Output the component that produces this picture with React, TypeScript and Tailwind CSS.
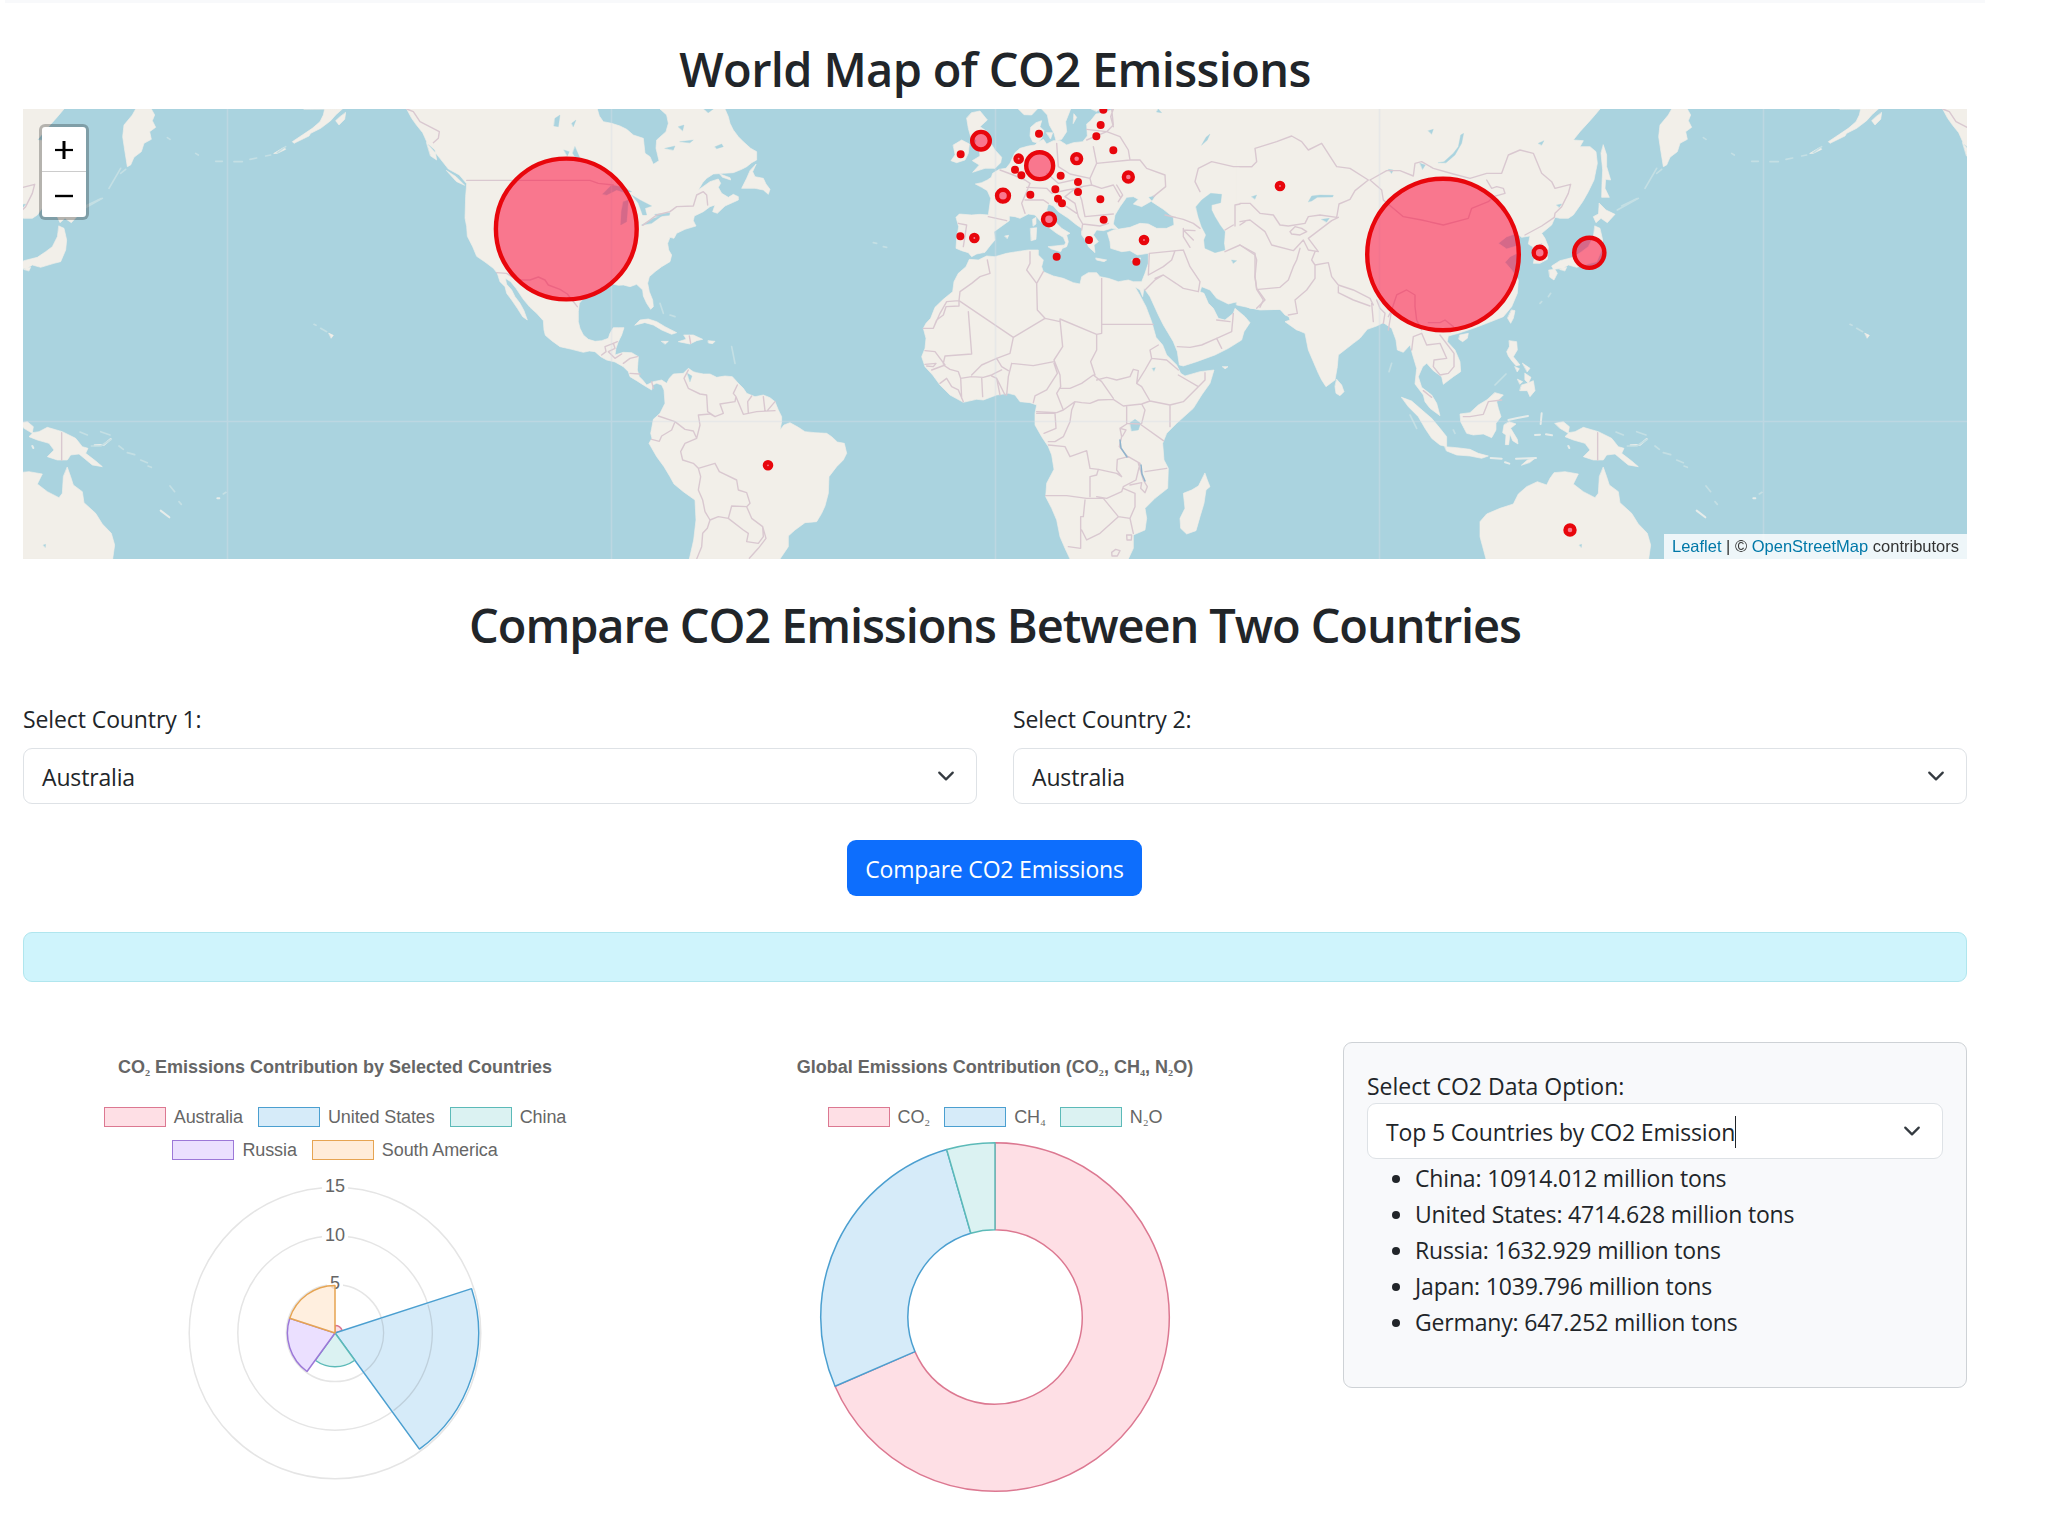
import React from "react";

const LAND = "#f2efe9";
const WATER = "#aad3df";

/* Coastlines are stored in thirds of a pixel, relative to each region's origin. */
const americas = {
  land: [
    "M-220 27L-205 55L-190 76L-172 98L-155 136L-130 163L-118 178L-95 207L-62 225L-40 251L-43 289L-45 354L-40 380L-38 409L-22 440L-10 469L15 486L40 505L52 520L60 545L75 560L80 580L95 600L112 625L128 650L142 660L132 632L120 610L105 590L95 570L80 553L76 535L92 545L108 565L130 598L150 622L170 640L190 662L192 690L196 706L215 722L240 740L275 748L310 757L328 753L345 755L362 770L380 780L405 786L430 800L445 815L450 830L470 842L490 855L515 870L518 855L530 850L545 855L552 870L555 910L540 940L520 958L515 985L512 1000L516 1015L507 1030L530 1070L552 1100L570 1130L582 1152L610 1175L645 1200L648 1260L641 1320L628 1377L900 1377L925 1340L925 1308L945 1290L975 1268L1010 1265L1025 1240L1035 1218L1045 1180L1047 1130L1070 1100L1090 1080L1100 1060L1093 1030L1072 1026L1055 1010L1040 1000L1005 998L975 995L955 982L930 968L912 975L900 990L905 965L905 950L895 930L885 905L870 893L850 885L825 890L800 880L790 865L775 850L757 830L735 828L710 832L690 822L670 822L650 818L640 815L625 805L610 820L580 822L568 835L560 850L545 840L520 845L500 855L488 840L478 830L472 810L475 770L455 758L430 757L405 765L408 745L415 725L425 705L432 683L415 683L400 683L390 700L385 715L365 722L345 724L325 718L310 705L300 685L295 665L295 635L298 610L315 590L340 580L365 560L390 550L415 556L430 555L450 560L470 553L488 570L490 588L500 610L512 628L520 620L518 600L508 575L503 550L508 530L525 515L545 500L570 485L575 465L566 450L563 430L570 412L582 415L590 400L615 388L648 378L640 362L643 348L670 335L690 320L705 315L698 335L712 340L735 318L775 300L775 290L760 283L745 292L725 280L715 262L722 250L715 237L690 245L655 270L668 248L680 235L700 222L730 220L760 218L785 208L800 200L815 188L830 180L830 155L812 145L790 125L775 110L760 90L750 70L745 50L735 27L540 27L560 45L565 70L558 95L530 120L528 145L537 182L520 193L510 170L495 160L490 115L460 105L440 88L420 78L395 70L370 65L358 48L352 27Z",
    "M828 193L818 215L825 230L850 235L858 252L870 268L865 283L850 270L825 265L785 265L800 235L810 212Z",
    "M465 675L480 660L505 657L530 665L555 680L590 698L575 703L545 690L520 675L495 668Z",
    "M612 705L640 705L668 718L650 722L630 732L595 725L618 718Z",
    "M545 724L565 724L556 732Z",
    "M685 722L705 724L698 731L686 729Z",
    "M720 222L750 233L752 240L728 232Z",
    "M-160 128L-135 150L-130 180L-148 168Z",
    "M-100 212L-72 230L-46 256L-70 245Z",
  ],
  lakes: [
    "M368 282L395 255L430 262L455 275L435 278L410 270L380 285Z",
    "M430 305L445 300L440 365L422 375L424 335Z",
    "M455 285L480 300L515 318L495 325L500 345L488 345L475 310Z",
    "M485 375L520 355L545 348L515 370Z",
    "M525 343L570 338L568 346L530 350Z",
    "M285 140L300 175L295 185L278 160Z",
    "M252 150L268 155L262 168Z",
    "M622 820L636 828L630 845Z",
    "M225 55L240 45L235 80L222 78Z",
    "M275 70L288 60L280 80Z",
    "M555 145L585 138L580 150Z",
    "M705 140L725 132L730 140L710 146Z",
    "M595 80L612 75L608 92Z",
    "M600 125L640 120L630 128Z",
    "M672 27L700 27L685 38Z",
  ],
  borders: [
    "M-40 241H330L355 250L400 255",
    "M488 376L530 345L570 335L590 320L640 318L650 285L670 275L680 285L683 315",
    "M50 518L80 520L110 540L150 540L175 531L195 540L205 555L240 568L262 582L292 620",
    "M365 765L378 755L375 740L400 730L412 725M400 730L405 745L385 755L405 775L425 762M430 790L450 775L472 770M450 820L480 822M515 845L520 865",
    "M625 810L612 835L625 865L660 882L680 885L683 935L705 950L730 940L720 912L765 905L768 890L760 880L772 855M768 890L790 943L830 935L885 932M805 940L803 905L815 888M850 890L855 932M885 905L862 932",
    "M705 950L690 942L655 945L660 975L650 1015M535 948L585 965L575 990L545 1008L538 1024L515 1018M585 965L615 988L640 993L650 1015L615 1030L602 1055L608 1080L640 1090L655 1105L705 1090L718 1115L770 1140L775 1170L800 1178L810 1210L800 1220L755 1218L745 1255L715 1250L690 1260L675 1235L668 1200L655 1170L662 1130L655 1105",
    "M690 1260L682 1285L668 1300L665 1340L650 1377M745 1255L790 1290L805 1300L800 1325L835 1330L850 1310L848 1280L815 1255L800 1220M848 1280L858 1315L835 1345L808 1375",
    "M628 708L632 730",
    "M-220 27L-200 35L-180 65L-122 95L-125 115L-140 128",
  ],
  faint: ["M540 610L550 640M570 645L585 650M755 740L765 790M1180 428L1190 430M1210 440L1220 442"],
};

const africaEurope = {
  land: [
    "M640 27L612 38L588 42L572 62L560 72L562 108L548 125L520 128L500 135L480 122L460 122L440 132L430 118L410 128L398 125L390 108L392 82L408 68L425 62L420 80L432 92L425 115L405 135L385 138L360 145L345 158L330 190L318 205L298 208L278 220L274 232L262 240L245 248L226 252L245 262L262 272L272 295L265 345L240 343L215 345L178 342L168 352L176 380L170 415L168 445L185 452L205 458L215 470L230 462L255 457L272 435L285 420L282 395L310 375L328 362L328 348L345 350L360 355L385 342L405 345L425 368L450 385L470 400L490 412L497 428L488 445L500 440L505 425L500 405L510 400L485 385L470 370L455 350L440 330L445 312L460 318L475 335L505 355L530 375L545 385L545 405L560 425L565 440L585 458L582 435L595 425L580 405L590 390L610 392L635 385L655 388L640 372L645 345L660 320L680 292L700 290L715 298L700 312L725 320L755 303L745 292L770 283L755 305L790 328L820 352L822 375L800 385L770 385L745 372L720 370L690 382L640 390L622 398L630 425L632 445L665 455L690 452L712 465L745 460L745 490L735 520L725 545L700 545L685 540L655 545L625 535L600 530L590 518L565 518L545 530L540 552L520 548L490 535L460 528L430 515L425 500L430 480L415 465L415 450L385 450L350 455L320 460L285 470L260 468L235 480L208 478L198 500L175 520L162 545L158 575L130 598L105 622L92 655L78 670L70 685L78 715L75 745L65 770L75 800L98 825L120 855L150 885L190 907L230 898L250 900L290 885L325 880L345 885L360 905L390 908L410 915L405 940L405 975L425 1010L445 1040L455 1065L462 1108L440 1150L437 1190L455 1225L470 1260L480 1310L495 1345L510 1377L685 1377L700 1345L700 1305L735 1290L740 1255L735 1225L765 1195L803 1165L805 1105L792 1080L788 1030L800 1000L830 970L880 925L905 885L930 850L942 810L900 815L855 828L842 820L830 795L800 765L788 735L768 712L755 665L738 620L722 590L705 560L720 570L728 590L732 565L750 590L775 645L790 675L820 725L832 755L838 795L850 798L890 785L945 765L985 745L1025 720L1032 695L1050 668L1035 650L1005 625L1000 640L975 660L955 655L940 625L925 610L912 580L900 575L905 560L930 570L950 595L985 612L1012 605L1050 625L1100 628L1140 628L1165 645L1170 660L1155 665L1190 690L1220 690L1220 27Z",
    "M215 38L240 33L262 60L240 80L262 95L265 118L285 150L305 172L302 188L285 205L255 205L218 217L238 195L217 182L240 168L238 150L222 148L230 120L212 110L205 85L200 55Z",
    "M160 135L185 120L208 132L205 160L195 180L170 188L153 182L165 165Z",
    "M425 27L442 45L448 75L462 100L468 122L485 118L500 95L497 65L512 27Z",
    "M355 27L372 44L395 45L412 27Z",
    "M522 42L530 52L520 70Z",
    "M440 98L458 98L452 116Z",
    "M575 27L600 27L590 34Z",
    "M392 385L410 383L408 418L394 422Z",
    "M398 358L408 352L408 372L400 378Z",
    "M445 440L492 435L482 455L455 447Z",
    "M588 474L620 480L612 485L590 480Z",
    "M695 480L722 474L712 490Z",
    "M915 1120L922 1140L930 1160L918 1170L912 1210L900 1250L888 1292L860 1302L842 1285L840 1255L855 1225L850 1180L875 1170L895 1158Z",
    "M315 408L326 406L322 415Z",
    "M968 800L984 800L976 806Z",
  ],
  lakes: [
    "M888 320L905 300L932 280L965 283L962 308L935 315L935 330L945 350L960 375L975 395L972 430L975 450L945 458L915 445L912 420L918 405L905 380L895 350Z",
    "M690 968L705 958L722 970L715 990L695 993Z",
    "M775 27L785 38L770 36Z",
    "M995 480L1010 482L1000 490Z",
    "M1055 290L1070 285L1065 297Z",
    "M905 135L918 112L930 102L922 120Z",
    "M757 805L766 803L762 813Z",
  ],
  borders: [
    "M262 480L270 520L240 530L215 550L180 575L177 602L140 605L120 640L100 685H70M177 602L177 618L138 620L130 645L110 660L100 685",
    "M177 602L340 712L435 655L480 665M205 635L215 762L135 768L130 790M75 752L105 755L135 795",
    "M435 655L412 630L410 550L380 510L390 490L390 455M410 550L430 515",
    "M480 657L590 703L605 700V535M605 673H760M590 703V750L572 785L585 825M480 660L488 740L462 780L480 825L482 860",
    "M340 712L330 760L290 775L245 795L215 825M290 775L305 800L325 812M335 790L400 797L462 785M215 830L250 832L275 825L305 810M245 832L248 890M275 828L290 835L300 885M290 835L315 885M335 790L325 830L320 885",
    "M130 795L150 808L175 815L182 835L215 830M182 835L185 895M120 850L140 835L155 860L175 870L190 905M75 793L108 790L100 800L80 798M135 795L95 810",
    "M462 790L472 820L440 870L405 888L400 908M482 860L470 880L490 930L470 938L410 935M482 865L510 865L545 850L580 825L605 845L640 895",
    "M490 930L525 905L545 908L570 910L595 900L640 898L670 918L725 912L750 903L810 915M590 840L620 832L650 840L690 830L700 808L715 812L710 850L725 860L750 903M710 850L735 810L755 775L800 780L835 810M755 775L750 750L775 735M835 825L895 860L850 905L810 915V980M895 860L915 840V818",
    "M680 918L680 970L720 972L790 1022M725 912L735 930L725 970M410 940L465 940L468 985L432 1000M525 905L515 930L510 965L490 1010L465 1025L445 1025",
    "M445 1035L495 1040L510 1070L560 1052L570 1105L595 1108L590 1125L570 1130L570 1190M595 1108L650 1120L665 1130L650 1110L652 1078L685 1070L720 1090L708 1140L670 1160L665 1175L620 1195L590 1190",
    "M437 1187H500L560 1195L610 1195M610 1195L655 1250L690 1255L700 1300M555 1200L550 1250H542V1345L505 1340M545 1290L560 1320L600 1300L655 1250M670 1165L705 1180L705 1220L690 1255M735 1115L800 1105M715 1090L730 1140L742 1160L735 1178L722 1165L725 1148L690 1155M680 972L660 985L665 1010L658 1040L685 1072M660 985L678 990L668 1008",
    "M647 1348L660 1352L652 1368L636 1368L635 1357ZM680 1305L695 1305L694 1320L681 1320Z",
    "M832 740L870 742L905 735L950 715L965 745M950 715L995 695L1000 640M950 660L990 665M735 570L765 540L790 525L850 565L895 575M745 525L748 460L830 452L850 450M790 525L765 535M745 525L790 500L815 480L825 452M850 450L870 500L900 545L895 575M870 442L850 410L850 385M795 345L850 358L880 370L900 385M850 390L885 392M850 390L880 420",
    "M975 455L1020 435L1065 460L1065 530L1070 568L1090 600L1080 622M975 390L1000 375M1005 378V315L1020 312M1020 375L1035 365",
    "M900 275L885 245L895 205L935 185L1000 200L1055 200",
    "M265 350L320 362M175 370L200 375L190 440M300 210L340 225L375 240L390 250L380 275L365 310L375 340M375 300L430 300L445 310M380 262L440 265L455 280L500 270L545 262M470 130L475 200L510 222L570 235L590 190L580 140M440 220L475 250L520 240M560 120L620 95L660 110L685 150L690 180L590 190M620 95L640 75L635 27M560 88L620 95",
    "M690 180L720 180L740 205L795 225L797 260L760 290M570 235L575 255L605 265L640 255L660 290M495 290L530 262L575 255M530 262L545 300L555 350L640 342M495 290L525 310L535 350L548 372L545 390M548 372L600 378L625 370M470 310L500 320L530 340M650 255L668 285L655 305",
    "M640 27L632 50L640 80",
  ],
};

const asia = {
  land: [
    "M-10 27L1080 27L1065 45L1050 62L1020 95L1000 120L1030 122L1020 140L1050 140L1068 155L1072 190L1062 240L1045 275L1028 305L1000 345L985 355L960 355L945 352L935 375L905 400L915 415L925 440L922 478L900 490L880 490L885 465L878 440L865 432L870 408L845 412L830 400L800 410L775 430L800 447L830 438L840 455L810 470L795 487L815 510L835 540L832 580L815 620L790 650L740 670L700 685L655 700L625 708L622 725L645 750L660 785L662 815L640 830L610 853L605 830L580 812L560 790L548 800L535 830L545 862L575 885L590 910L600 947L570 925L555 905L550 885L525 852L530 805L518 765L510 735L490 757L472 750L468 720L455 685L430 668L410 678L382 688L360 715L340 730L295 765L292 800L285 840L258 860L245 840L235 820L205 750L195 700L172 690L150 668L165 658L135 645L120 628L60 630L-10 615Z",
    "M290 838L305 855L312 875L300 887L288 880L285 860Z",
    "M660 705L685 700L682 715L668 725L657 718Z",
    "M815 630L825 632L820 655L812 670L803 655Z",
    "M808 722L830 725L832 750L820 770L840 795L828 797L815 782L805 768L800 755L808 740Z",
    "M833 838L848 845L840 852ZM848 790L870 805L862 815ZM855 820L873 832L865 850L855 840ZM825 800L838 806L832 815Z",
    "M845 855L862 850L880 842L885 872L870 890L862 872L840 872Z",
    "M765 878L790 885L770 905L775 925L783 950L768 970L768 990L755 1013L730 1002L700 1005L680 1000L662 965L660 942L690 938L715 915L740 900Z",
    "M485 892L515 903L540 925L575 955L600 985L620 1010L620 1040L600 1035L575 1015L555 985L535 950L505 920Z",
    "M615 1040L650 1043L690 1048L715 1060L745 1068L725 1075L690 1068L650 1065L620 1053Z",
    "M845 1095L862 1080L885 1075L870 1087Z",
    "M945 970L970 965L988 980L985 998L1005 995L1030 982L1075 995L1115 1015L1135 1040L1152 1045L1145 1060L1175 1083L1195 1100L1165 1095L1125 1062L1100 1065L1090 1080L1060 1080L1030 1070L1050 1050L1035 1030L1000 1020L975 1010L985 1000L960 985Z",
    "M1090 1102L1100 1130L1108 1155L1135 1175L1140 1208L1175 1240L1195 1272L1222 1300L1232 1335L1226 1377L738 1377L728 1340L720 1310L720 1265L740 1242L780 1225L820 1212L835 1182L860 1160L892 1145L920 1155L930 1135L942 1118L975 1115L1015 1122L1000 1152L1030 1175L1065 1193L1075 1180L1078 1130Z",
    "M1090 135L1100 165L1100 200L1112 240L1097 238L1095 265L1108 292L1085 292L1086 250L1088 210L1083 160Z",
    "M1078 310L1098 330L1125 343L1102 368L1083 355L1068 368L1060 350L1075 342Z",
    "M1065 378L1080 385L1088 420L1085 450L1070 485L1050 490L1010 502L985 495L970 505L940 508L935 498L960 482L1000 472L1025 455L1045 440L1060 410Z",
    "M927 510L945 508L952 520L942 540L930 532Z",
    "M960 508L980 502L975 512Z",
    "M808 965L828 972L812 985L832 1018L834 1032L818 1022L810 1002L806 1034L796 1034L798 1005L788 998L792 975Z",
  ],
  lakes: [
    "M595 188L612 185L640 160L655 140L662 105L671 100L665 130L645 165L618 188Z",
    "M205 305L215 288L240 285L280 286L278 291L232 292L215 303Z",
    "M245 358L268 355L260 366Z",
    "M950 315L965 312L958 322Z",
    "M895 130L912 122L905 135Z",
    "M565 92L580 88L575 102Z",
    "M540 190L556 195L548 208Z",
    "M445 208L460 210L455 220Z",
    "M1018 1335L1025 1333L1024 1342Z",
  ],
  islands: [
    "M805 960L832 954L864 948",
    "M905 940L902 972M885 1005L900 1004M918 1003L936 1006M752 1074L785 1076M828 1076L888 1074M795 1087L808 1091M985 1038L988 1044",
    "M1172 1036L1200 1034L1220 1017",
  ],
  faint: [
    "M765 855L798 822",
    "M1132 330L1195 295M1215 265L1250 205M455 790L447 815M925 590L932 580M900 610L905 605M510 945L530 985M645 1000L640 990M1128 996L1150 1005",
  ],
  borders: [
    "M0 200H35L50 185L45 145L110 125L155 108L185 125L205 150L245 130L290 200L330 205L385 240L345 272L330 298L297 312L290 352L240 345L205 350L195 370L145 378L120 375L100 345L60 340L30 310L0 310",
    "M0 365L30 360L75 395L95 435L160 452L190 420L205 450L235 455L205 415L275 362L295 352M150 395L165 380L185 385L200 395L180 405L155 402ZM0 435L45 465L50 480L45 530L50 565L75 600L50 625M55 568L120 562L145 540L160 500L170 480L180 445M225 455L215 480L225 495L265 488L275 530L295 555L340 570L390 595L400 615M225 495L225 535L200 570L165 600L172 640L145 645",
    "M295 560L295 578L340 600L390 618M395 610L400 665M410 600L420 625L435 640L430 670M445 650L455 630L470 585L500 570L525 585L525 620L530 660L545 690M455 630L445 690",
    "M390 240L425 270L430 300L490 350L545 360L610 375L685 355L695 325L745 305L760 290L795 280L790 265L770 260L755 265L740 240M390 240L440 212L480 212L520 228L525 190L545 185L580 205L640 222L690 235L740 220L785 220L805 165L840 150L880 160L905 220L935 245L945 265L992 253L985 280L965 320L945 340L943 352L905 378L855 405M882 445L905 432",
    "M515 750L520 710L545 700L560 735L600 730L620 775L582 780L580 800L600 825L625 820L642 800V760L600 705M565 668L600 668L615 660L640 680M550 872L575 892M670 950L690 950L730 943L745 905L785 900M1073 998V1080",
  ],
};

const pacific = {
  land: [
    "M215 27L205 45L180 75L176 110L182 150L190 200L200 195L210 172L232 155L240 130L262 118L257 95L275 82L265 62L272 45L262 27Z",
    "M720 27L782 27L778 45L768 65L745 85L715 105L685 125L690 130L735 108L740 100L770 85L800 62L815 45L835 27Z",
    "M845 38L842 58L825 75L815 62L828 50Z",
    "M630 160L660 142L665 148L640 160Z",
    "M795 700L808 706L802 714Z",
  ],
  islands: ["M290 1232L316 1252", "M460 1195H466"],
  faint: [
    "M510 185H535M558 178L578 174M605 168L620 165M640 158L665 140M455 184H475M310 113L318 118M395 160L403 165M750 673L756 676M770 685L788 695M165 1038L178 1048M190 1058L212 1064M230 1080L250 1088M252 1098L262 1102M318 1158L332 1175M345 1205L352 1213M478 1182L486 1177M110 995L138 1005M82 1038L110 1038L142 1018M65 318L110 296M170 220L185 208",
  ],
};

type Region = {
  land: string[];
  lakes?: string[];
  borders?: string[];
  islands?: string[];
  faint?: string[];
};

const regions: [number, Region][] = [
  [480, americas],
  [900, africaEurope],
  [1240, asia],
  [1600, pacific],
];

function BaseMap() {
  return (
    <g strokeLinejoin="round" strokeLinecap="round">
      {regions.map(([x, region]) => (
        <g key={x} transform={`translate(${x} 100) scale(0.33333)`}>
          <path d={region.land.join("")} fill={LAND} stroke={LAND} strokeWidth="2" />
          {region.islands && <path d={region.islands.join("")} fill="none" stroke="#e6ecea" strokeWidth="6" />}
          {region.faint && <path d={region.faint.join("")} fill="none" stroke="#c4dfe4" strokeWidth="5" />}
        </g>
      ))}
      {regions.map(([x, region]) => (
        <g key={x} transform={`translate(${x} 100) scale(0.33333)`}>
          {region.lakes && <path d={region.lakes.join("")} fill={WATER} stroke={WATER} strokeWidth="1" />}
          {region.borders && <path d={region.borders.join("")} fill="none" stroke="#d9c8d0" strokeWidth="4.2" />}
        </g>
      ))}
    </g>
  );
}

/* [x, y, outer radius], in the same units as the coastlines */
const europeMarkers: [number, number, number][] = [
  [243, 122, 33], [182, 163, 12], [417, 101, 12], [345, 209, 12], [364, 226, 12], [356, 176, 16],
  [419, 197, 47], [530, 176, 20], [640, 151, 12], [589, 109, 12], [602, 75, 12], [610, 29, 12],
  [685, 231, 20], [482, 227, 12], [534, 246, 12], [534, 276, 12], [466, 268, 12], [474, 296, 12],
  [486, 310, 12], [391, 284, 12], [601, 298, 12], [309, 287, 24.5], [447, 358, 24.5], [611, 359, 12],
  [567, 420, 12], [181, 409, 12], [223, 414, 16], [470, 470, 12], [732, 420, 16], [709, 485, 12],
  [1140, 258, 16],
];
const markers: [number, number, number][] = [
  ...europeMarkers.map(([x, y, r]): [number, number, number] => [900 + x / 3, 100 + y / 3, r / 3]),
  [566.3, 229, 72.6],
  [1443, 254.5, 78],
  [1589.3, 252.8, 17.3],
  [1539.7, 252.7, 8.2],
  [1570, 530, 6.7],
  [768, 465.3, 5.3],
];

function WorldMap() {
  return (
    <div className="relative h-[450px] w-full overflow-hidden bg-[#aad3df]">
      <svg className="block h-[450px] w-[1944px]" viewBox="23 109 1944 450">
        <defs>
          <g id="world">
            <BaseMap />
          </g>
          <filter id="tileSoftness" x="0" y="0" width="1" height="1">
            <feGaussianBlur stdDeviation="0.6" />
          </filter>
        </defs>
        <g filter="url(#tileSoftness)">
          <use href="#world" />
          <use href="#world" x="-1536" />
          <use href="#world" x="1536" />
          <g fill="none" stroke="#8fb3cc" strokeWidth="1.5" strokeLinecap="round">
            <path d="M1120 440L1121 448L1127 457M1141 465L1142 474L1145 481" />
          </g>
          <path
            d="M227.5 109V559M611.5 109V559M995.5 109V559M1379.5 109V559M1763.5 109V559M23 421.5H1967"
            stroke="#d8dee6"
            strokeOpacity="0.4"
            strokeWidth="1.6"
          />
        </g>
        {markers.map(([x, y, r]) => (
          <circle
            key={`${x}-${y}`}
            cx={x}
            cy={y}
            r={r > 4.6 ? r - 2.2 : r / 2}
            strokeWidth={r > 4.6 ? 4.4 : r}
            stroke="#e8060c"
            fill="#ff0033"
            fillOpacity="0.5"
          />
        ))}
      </svg>
      <div className="absolute top-[15px] left-[15.5px] flex w-[50px] flex-col rounded-[6px] border-[3px] border-black/25 bg-white bg-clip-padding">
        <button className="flex h-[45px] items-center justify-center border-b border-[#ccc] pt-[2px]">
          <svg width="20" height="20" viewBox="0 0 20 20">
            <path d="M1 10H19" stroke="#000" strokeWidth="2.2" />
            <path d="M10 1V19" stroke="#000" strokeWidth="3" />
          </svg>
        </button>
        <button className="flex h-[45px] items-center justify-center">
          <svg width="20" height="20" viewBox="0 0 20 20">
            <path d="M1 11H19" stroke="#000" strokeWidth="2.4" />
          </svg>
        </button>
      </div>
      <div className="absolute right-0 bottom-0 flex h-[25px] items-center bg-white/80 px-[8px] pb-[2px] font-['Liberation_Sans',sans-serif] text-[16.5px] tracking-normal whitespace-pre text-[#333]">
        <span className="text-[#0078a8]">Leaflet</span>
        <span> | © </span>
        <span className="text-[#0078a8]">OpenStreetMap</span>
        <span> contributors</span>
      </div>
    </div>
  );
}

function Select({ value, caret = false }: { value: string; caret?: boolean }) {
  return (
    <div className="flex h-[56px] items-center justify-between rounded-[9px] border-[1.5px] border-[#dee2e6] bg-white pr-[21px] pl-[18px]">
      <span className="flex items-center pt-[2px]">
        {value}
        {caret && <span className="h-[32px] w-px bg-[#212529]" />}
      </span>
      <svg width="18" height="18" viewBox="0 0 16 16" fill="none" stroke="#343a40" strokeWidth="2" strokeLinecap="round" strokeLinejoin="round">
        <path d="m2 5 6 6 6-6" />
      </svg>
    </div>
  );
}

const palette = {
  pink: { fill: "#fedfe5", stroke: "#dc7891" },
  blue: { fill: "#d6ebf9", stroke: "#4b9fd0" },
  teal: { fill: "#dbf2f2", stroke: "#5cbab8" },
  purple: { fill: "#ebe0ff", stroke: "#9c78d8" },
  orange: { fill: "#ffecd9", stroke: "#e6a452" },
};
type Tone = keyof typeof palette;

function Sub({ children }: { children: string }) {
  return <span className="font-['Liberation_Serif',serif] text-[17px] leading-none">{children}</span>;
}

function LegendItem({ tone, children }: { tone: Tone; children: React.ReactNode }) {
  const { fill, stroke } = palette[tone];
  return (
    <div className="flex h-[20px] items-center gap-[8px]">
      <span className="h-[20px] w-[62px] border-[1.5px]" style={{ backgroundColor: fill, borderColor: stroke }} />
      <span className="tracking-[-0.1px] whitespace-nowrap">{children}</span>
    </div>
  );
}

function point(cx: number, cy: number, r: number, deg: number) {
  const a = ((deg - 90) * Math.PI) / 180;
  return `${(cx + r * Math.cos(a)).toFixed(2)} ${(cy + r * Math.sin(a)).toFixed(2)}`;
}

function PolarChart() {
  const slices: [number, Tone][] = [[7.6, "pink"], [143.6, "blue"], [33.7, "teal"], [47.6, "purple"], [47.6, "orange"]];
  const c = 160;
  return (
    <svg className="block" width="320" height="320" viewBox="0 0 320 320">
      {[48.6, 97.2, 145.8].map((r) => (
        <circle key={r} cx={c} cy={c} r={r} fill="none" stroke="#e5e5e5" strokeWidth="1.5" />
      ))}
      {[5, 10, 15].map((v, i) => (
        <g key={v}>
          <rect x={c - (v > 5 ? 13 : 8)} y={c - 48.6 * (i + 1) - 12} width={v > 5 ? 26 : 16} height="24" fill="#fff" />
          <text x={c} y={c - 48.6 * (i + 1) + 5} textAnchor="middle" fontSize="18" fill="#666">{v}</text>
        </g>
      ))}
      {slices.map(([r, tone], i) => (
        <path
          key={tone}
          d={`M${c} ${c}L${point(c, c, r, i * 72)}A${r} ${r} 0 0 1 ${point(c, c, r, i * 72 + 72)}Z`}
          fill={palette[tone].fill}
          fillOpacity={tone === "orange" ? 0.85 : 1}
          stroke={palette[tone].stroke}
          strokeWidth="1.5"
          strokeLinejoin="bevel"
        />
      ))}
      <g fill="none" stroke="#bfd0dc" strokeWidth="1.3">
        <path d={`M${point(c, c, 48.6, 73)}A48.6 48.6 0 0 1 ${point(c, c, 48.6, 143)}`} />
        <path d={`M${point(c, c, 97.2, 73)}A97.2 97.2 0 0 1 ${point(c, c, 97.2, 143)}`} />
      </g>
    </svg>
  );
}

function DoughnutChart() {
  const slices: [number, number, Tone][] = [[0, 246.6, "pink"], [246.6, 343.9, "blue"], [343.9, 360, "teal"]];
  const c = 180;
  const R = 174.3;
  const r = 87.2;
  return (
    <svg className="block" width="360" height="360" viewBox="0 0 360 360">
      {slices.map(([a, b, tone]) => {
        const large = b - a > 180 ? 1 : 0;
        return (
          <path
            key={tone}
            d={`M${point(c, c, R, a)}A${R} ${R} 0 ${large} 1 ${point(c, c, R, b)}L${point(c, c, r, b)}A${r} ${r} 0 ${large} 0 ${point(c, c, r, a)}Z`}
            fill={palette[tone].fill}
            stroke={palette[tone].stroke}
            strokeWidth="1.5"
            strokeLinejoin="bevel"
          />
        );
      })}
    </svg>
  );
}

const topCountries = [
  "China: 10914.012 million tons",
  "United States: 4714.628 million tons",
  "Russia: 1632.929 million tons",
  "Japan: 1039.796 million tons",
  "Germany: 647.252 million tons",
];

export default function App() {
  return (
    <div className="h-[1526px] w-[2052px] overflow-hidden bg-white font-['Open_Sans','Noto_Sans',sans-serif] text-[23px] leading-[36px] tracking-[-0.16px] text-[#212529]">
      <div className="ml-[5px] h-[3px] w-[1980px] bg-[#f8f9fb]" />
      <main className="ml-[23px] flex w-[1944px] flex-col">
        <h1 className="mt-[37px] h-[69px] text-center text-[47px] leading-[58px] font-semibold tracking-[-0.65px]">
          World Map of CO2 Emissions
        </h1>
        <WorldMap />
        <h2 className="mt-[37px] text-center text-[47px] leading-[58px] font-semibold tracking-[-1.1px]">
          Compare CO2 Emissions Between Two Countries
        </h2>
        <div className="mt-[47px] grid grid-cols-2 gap-[36px]">
          <div>
            <label className="mb-[11px] block tracking-[-0.1px]">Select Country 1:</label>
            <Select value="Australia" />
          </div>
          <div>
            <label className="mb-[11px] block tracking-[-0.1px]">Select Country 2:</label>
            <Select value="Australia" />
          </div>
        </div>
        <button className="mt-[36px] mr-px h-[56px] w-[295px] self-center rounded-[9px] bg-[#0d6efd] pt-[2px] tracking-[-0.2px] whitespace-nowrap text-white">
          Compare CO2 Emissions
        </button>
        <div className="mt-[36px] h-[50px] rounded-[9px] border-[1.5px] border-[#b0e6ee] bg-[#cff4fc]" />
        <div className="mt-[60px] grid grid-cols-3 items-start gap-[36px]">
          <section className="flex flex-col items-center pt-[15px] font-['Liberation_Sans',sans-serif] text-[18px] leading-[20px] tracking-normal text-[#666]">
            <h3 className="h-[20px] font-bold whitespace-nowrap">
              CO<Sub>₂</Sub> Emissions Contribution by Selected Countries
            </h3>
            <div className="mt-[30px] flex gap-[15px]">
              <LegendItem tone="pink">Australia</LegendItem>
              <LegendItem tone="blue">United States</LegendItem>
              <LegendItem tone="teal">China</LegendItem>
            </div>
            <div className="mt-[13px] mb-[13px] flex gap-[15px]">
              <LegendItem tone="purple">Russia</LegendItem>
              <LegendItem tone="orange">South America</LegendItem>
            </div>
            <PolarChart />
          </section>
          <section className="flex flex-col items-center pt-[15px] font-['Liberation_Sans',sans-serif] text-[18px] leading-[20px] tracking-normal text-[#666]">
            <h3 className="h-[20px] font-bold whitespace-nowrap">
              Global Emissions Contribution (CO<Sub>₂</Sub>, CH<Sub>₄</Sub>, N<Sub>₂</Sub>O)
            </h3>
            <div className="mt-[30px] mb-[10px] flex gap-[14px]">
              <LegendItem tone="pink">CO<Sub>₂</Sub></LegendItem>
              <LegendItem tone="blue">CH<Sub>₄</Sub></LegendItem>
              <LegendItem tone="teal">N<Sub>₂</Sub>O</LegendItem>
            </div>
            <DoughnutChart />
          </section>
          <section className="h-[346px] rounded-[9px] border-[1.5px] border-[#ced2d6] bg-[#f8f9fb] px-[23px] pt-[24px]">
            <label className="block h-[36px] pt-px tracking-normal">Select CO2 Data Option:</label>
            <Select value="Top 5 Countries by CO2 Emission" caret />
            <ul className="list-disc pt-px pl-[48px]">
              {topCountries.map((item) => (
                <li key={item}>{item}</li>
              ))}
            </ul>
          </section>
        </div>
      </main>
    </div>
  );
}
